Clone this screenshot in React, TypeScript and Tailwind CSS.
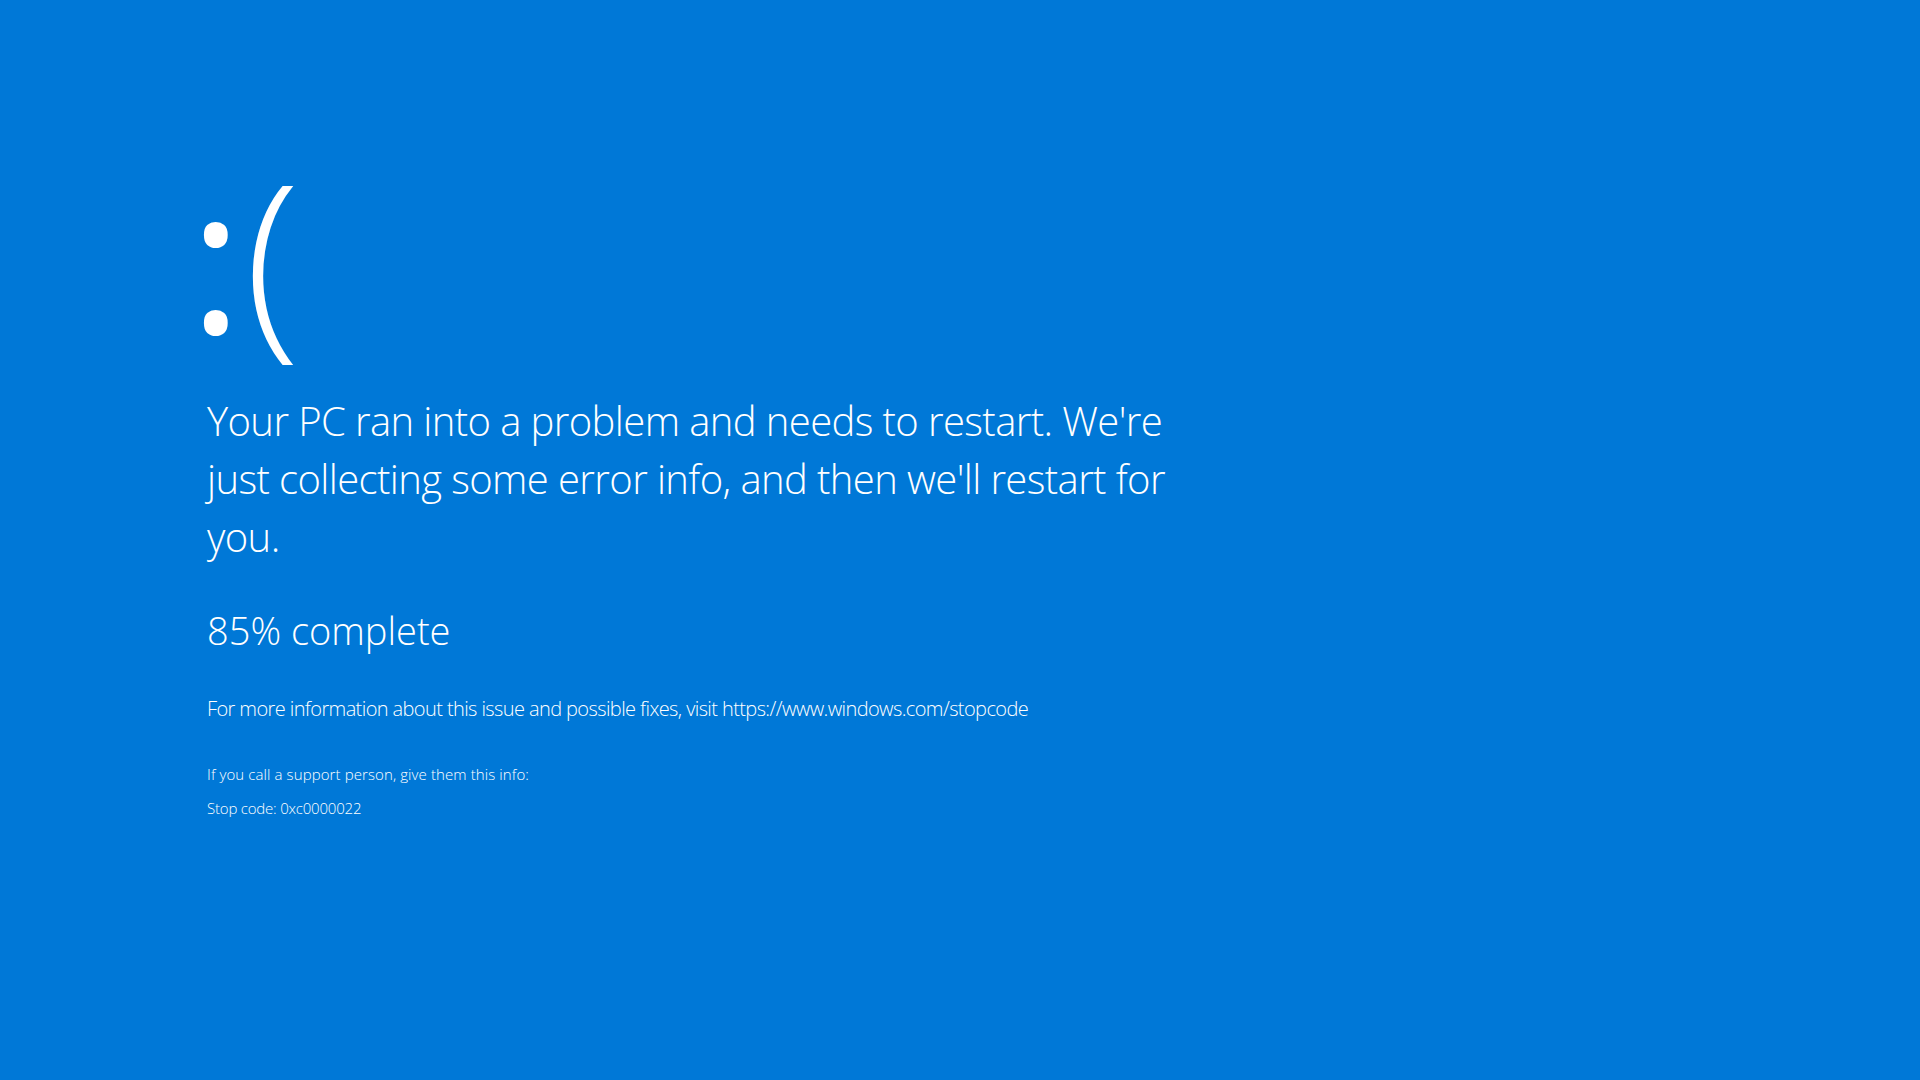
export default function App() {
  return (
    <div className="w-full h-[1080px] bg-[#0078d7] text-white overflow-hidden font-['Open_Sans','Noto_Sans',sans-serif]">
      <div className="pl-[207px] pt-[152px]">
        <div className="flex items-baseline leading-none">
          <span className="text-[204px] font-normal ml-[-18px]">:</span>
          <span className="text-[204px] font-light ml-[2px]">(</span>
        </div>
        <div className="mt-[36px] text-[40px] leading-[58px] font-light tracking-[-0.6px] whitespace-nowrap">
          <div>Your PC ran into a problem and needs to restart. We're</div>
          <div>just collecting some error info, and then we'll restart for</div>
          <div>you.</div>
        </div>
        <div className="mt-[38px] text-[38px] leading-[52px] font-light whitespace-nowrap">85% complete</div>
        <div className="mt-[39px] text-[20px] leading-[28px] font-light tracking-[-0.6px] whitespace-nowrap">
          For more information about this issue and possible fixes, visit https://www.windows.com/stopcode
        </div>
        <div className="mt-[41px] text-[15px] leading-[20px] font-light tracking-[0.1px] whitespace-nowrap">
          If you call a support person, give them this info:
        </div>
        <div className="mt-[14px] text-[15px] leading-[20px] font-light tracking-[-0.2px] whitespace-nowrap">Stop code: 0xc0000022</div>
      </div>
    </div>
  );
}
